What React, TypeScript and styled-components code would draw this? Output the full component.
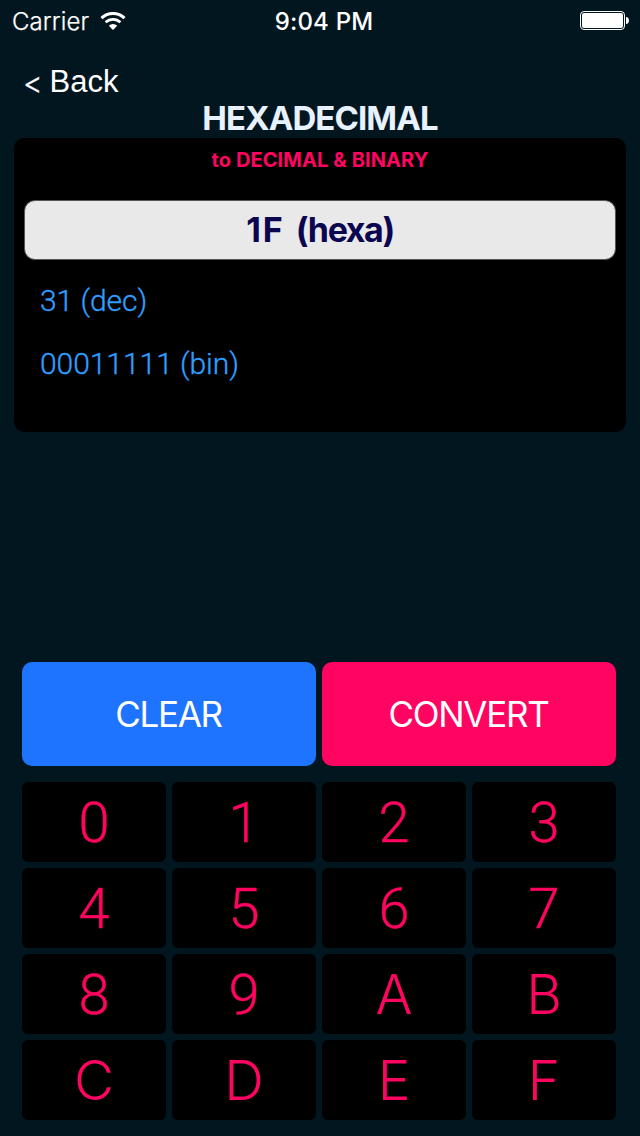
import React from "react";
import styled, { createGlobalStyle } from "styled-components";

const GlobalStyle = createGlobalStyle`
  * { box-sizing: border-box; }
  body { margin: 0; background: #021620; }
`;

const pink = "#ff0460";

const Screen = styled.main`
  width: 640px;
  height: 1136px;
  display: flex;
  flex-direction: column;
  background: #021620;
  font-family: Inter, "Liberation Sans", sans-serif;
  color: #fff;
  white-space: nowrap;
`;

const StatusBar = styled.header`
  height: 40px;
  padding: 2px 11px 0 12px;
  display: grid;
  grid-template-columns: 1fr auto 1fr;
  align-items: center;
  line-height: 38px;
`;

const Carrier = styled.div`
  display: flex;
  align-items: center;
  gap: 11px;
  font-size: 24px;
  font-weight: 300;
  letter-spacing: 0.1px;
`;

const CarrierName = styled.span`
  padding-top: 2px;
  line-height: 36px;
  -webkit-text-stroke: 0.25px currentColor;
`;

const Clock = styled.div`
  padding: 2px 0 0 7px;
  font-size: 24px;
  line-height: 36px;
  font-weight: 500;
  letter-spacing: 0.2px;
`;

const BatteryIcon = styled.svg`
  justify-self: end;
`;

const BackLink = styled.a`
  align-self: flex-start;
  display: flex;
  gap: 7px;
  margin: 24px 0 0 23px;
  height: 36px;
  font: 400 31px/36px "Liberation Sans", sans-serif;
`;

const Chevron = styled.span`
  font-family: Inter, sans-serif;
  font-weight: 300;
  font-size: 30px;
  line-height: 38px;
  -webkit-text-stroke: 0.3px currentColor;
`;

const Title = styled.h1`
  margin: 0;
  height: 38px;
  text-align: center;
  font-size: 33px;
  line-height: 37px;
  font-weight: 700;
  letter-spacing: -0.9px;
  color: #e8f2ff;
`;

const Panel = styled.section`
  margin: 0 14px;
  height: 294px;
  padding: 0 10px;
  border-radius: 10px;
  background: #000;
`;

const Subtitle = styled.h2`
  margin: 0;
  height: 62px;
  text-align: center;
  font-size: 20px;
  line-height: 44px;
  font-weight: 700;
  letter-spacing: 0.1px;
  color: ${pink};
`;

const Display = styled.div`
  height: 60px;
  border: 1px solid #555;
  border-radius: 11px;
  background: #e9e9e9;
  color: #0b0650;
  text-align: center;
  font-size: 34px;
  line-height: 57px;
  font-weight: 700;
  letter-spacing: -1.4px;
  word-spacing: 1px;
`;

const HexValue = styled.span`
  letter-spacing: 2px;
`;

const Results = styled.div`
  padding-top: 9px;
`;

const Result = styled.div`
  height: 63px;
  padding-left: 16px;
  font: 300 30px/63px Roboto, "Liberation Sans", sans-serif;
  letter-spacing: -0.05px;
  -webkit-text-stroke: 0.35px currentColor;
  color: #2f9fff;
`;

const Controls = styled.section`
  margin: 230px 24px 0 22px;
`;

const Actions = styled.div`
  display: grid;
  grid-template-columns: 1fr 1fr;
  gap: 6px;
  margin-bottom: 16px;
`;

const Action = styled.button<{ $color: string }>`
  height: 104px;
  padding: 0 1px 0 0;
  border: 0;
  border-radius: 10px;
  background: ${(p) => p.$color};
  color: #fff;
  font: 400 35px/104px Inter, "Liberation Sans", sans-serif;
  letter-spacing: -1.3px;
`;

const Keypad = styled.div`
  display: grid;
  grid-template-columns: repeat(4, 1fr);
  grid-auto-rows: 80px;
  gap: 6px;
`;

const Key = styled.button<{ $letter: boolean }>`
  padding: 2px 0 0;
  border: 0;
  border-radius: 6px;
  background: #000;
  color: ${pink};
  font: 300 56px/78px Roboto, "Liberation Sans", sans-serif;
  -webkit-text-stroke: 0.4px currentColor;
  ${(p) =>
    p.$letter &&
    `
    padding-top: 0;
    font: 300 55px/80px Inter, "Liberation Sans", sans-serif;
    -webkit-text-stroke: 0;
  `}
`;

const keys = "0123456789ABCDEF".split("");

export default function App() {
  return (
    <Screen>
      <GlobalStyle />
      <StatusBar>
        <Carrier>
          <CarrierName>Carrier</CarrierName>
          <svg width="26" height="18" viewBox="0 0 26 18" fill="none" stroke="#fff">
            <path d="M1.5 6.1 A16.5 16.5 0 0 1 24.5 6.1" strokeWidth="3" />
            <path d="M5.6 10.3 A10.6 10.6 0 0 1 20.4 10.3" strokeWidth="2.7" />
            <path d="M13 18 L8.8 13.7 A6 6 0 0 1 17.2 13.7 Z" fill="#fff" stroke="none" />
          </svg>
        </Carrier>
        <Clock>9:04 PM</Clock>
        <BatteryIcon width="49" height="20" viewBox="0 0 49 20">
          <rect x="0.5" y="0.5" width="44" height="18" rx="3.5" fill="none" stroke="#fff" />
          <rect x="2" y="2" width="41" height="15" rx="2" fill="#fff" />
          <path d="M46 6 C50 6 50 13 46 13 Z" fill="#fff" />
        </BatteryIcon>
      </StatusBar>
      <BackLink>
        <Chevron>&lt;</Chevron>
        <span>Back</span>
      </BackLink>
      <Title>HEXADECIMAL</Title>
      <Panel>
        <Subtitle>to DECIMAL &amp; BINARY</Subtitle>
        <Display>
          <HexValue>1F </HexValue>(hexa)
        </Display>
        <Results>
          <Result>31 (dec)</Result>
          <Result>00011111 (bin)</Result>
        </Results>
      </Panel>
      <Controls>
        <Actions>
          <Action $color="#1e74ff">CLEAR</Action>
          <Action $color={pink}>CONVERT</Action>
        </Actions>
        <Keypad>
          {keys.map((k) => (
            <Key key={k} $letter={k >= "A"}>{k}</Key>
          ))}
        </Keypad>
      </Controls>
    </Screen>
  );
}
